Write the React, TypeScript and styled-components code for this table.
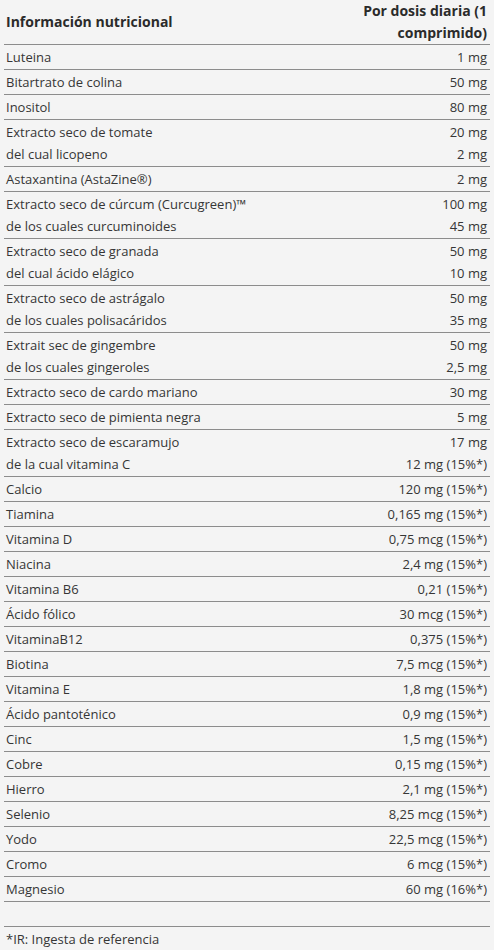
import React from "react";
import styled, { createGlobalStyle } from "styled-components";

type Line = [string, string];

const rows: Line[][] = [
  [["Luteina", "1 mg"]],
  [["Bitartrato de colina", "50 mg"]],
  [["Inositol", "80 mg"]],
  [
    ["Extracto seco de tomate", "20 mg"],
    ["del cual licopeno", "2 mg"],
  ],
  [["Astaxantina (AstaZine®)", "2 mg"]],
  [
    ["Extracto seco de cúrcum (Curcugreen)™", "100 mg"],
    ["de los cuales curcuminoides", "45 mg"],
  ],
  [
    ["Extracto seco de granada", "50 mg"],
    ["del cual ácido elágico", "10 mg"],
  ],
  [
    ["Extracto seco de astrágalo", "50 mg"],
    ["de los cuales polisacáridos", "35 mg"],
  ],
  [
    ["Extrait sec de gingembre", "50 mg"],
    ["de los cuales gingeroles", "2,5 mg"],
  ],
  [["Extracto seco de cardo mariano", "30 mg"]],
  [["Extracto seco de pimienta negra", "5 mg"]],
  [
    ["Extracto seco de escaramujo", "17 mg"],
    ["de la cual vitamina C", "12 mg (15%*)"],
  ],
  [["Calcio", "120 mg (15%*)"]],
  [["Tiamina", "0,165 mg (15%*)"]],
  [["Vitamina D", "0,75 mcg (15%*)"]],
  [["Niacina", "2,4 mg (15%*)"]],
  [["Vitamina B6", "0,21 (15%*)"]],
  [["Ácido fólico", "30 mcg (15%*)"]],
  [["VitaminaB12", "0,375 (15%*)"]],
  [["Biotina", "7,5 mcg (15%*)"]],
  [["Vitamina E", "1,8 mg (15%*)"]],
  [["Ácido pantoténico", "0,9 mg (15%*)"]],
  [["Cinc", "1,5 mg (15%*)"]],
  [["Cobre", "0,15 mg (15%*)"]],
  [["Hierro", "2,1 mg (15%*)"]],
  [["Selenio", "8,25 mcg (15%*)"]],
  [["Yodo", "22,5 mcg (15%*)"]],
  [["Cromo", "6 mcg (15%*)"]],
  [["Magnesio", "60 mg (16%*)"]],
];

const GlobalStyle = createGlobalStyle`
  html, body {
    margin: 0;
    background: #f4f4f4;
  }
  body {
    font-family: "Open Sans", "Liberation Sans", sans-serif;
    color: #363636;
  }
`;

const Page = styled.div`
  padding: 0 4px;
`;

const Table = styled.div`
  display: flex;
  flex-direction: column;
`;

const HeadRow = styled.div`
  display: flex;
  justify-content: space-between;
  align-items: center;
  border-bottom: 1px solid #8c8c8c;
  font-size: 14px;
  font-weight: 700;
  line-height: 22px;
  color: #2b2b2b;
`;

const HeadLeft = styled.div`
  padding-left: 2px;
`;

const HeadRight = styled.div`
  width: 132px;
  text-align: right;
  padding-right: 3px;
`;

const Row = styled.div`
  display: flex;
  justify-content: space-between;
  padding: 1px 0;
  border-bottom: 1px solid #8c8c8c;
  font-size: 13px;
  line-height: 22px;
`;

const Col = styled.div<{ $right?: boolean }>`
  display: flex;
  flex-direction: column;
  padding: ${(p) => (p.$right ? "0 3px 0 0" : "0 0 0 2px")};
  text-align: ${(p) => (p.$right ? "right" : "left")};
  white-space: nowrap;
`;

const Footnote = styled.div`
  margin-top: 24px;
  border-top: 1px solid #8c8c8c;
  padding: 1px 2px;
  font-size: 13px;
  line-height: 22px;
`;

export default function App() {
  return (
    <>
      <GlobalStyle />
      <Page>
        <Table>
          <HeadRow>
            <HeadLeft>Información nutricional</HeadLeft>
            <HeadRight>Por dosis diaria (1 comprimido)</HeadRight>
          </HeadRow>
          {rows.map((lines, i) => (
            <Row key={i}>
              <Col>
                {lines.map((l) => (
                  <span key={l[0]}>{l[0]}</span>
                ))}
              </Col>
              <Col $right>
                {lines.map((l) => (
                  <span key={l[0]}>{l[1]}</span>
                ))}
              </Col>
            </Row>
          ))}
        </Table>
        <Footnote>*IR: Ingesta de referencia</Footnote>
      </Page>
    </>
  );
}
